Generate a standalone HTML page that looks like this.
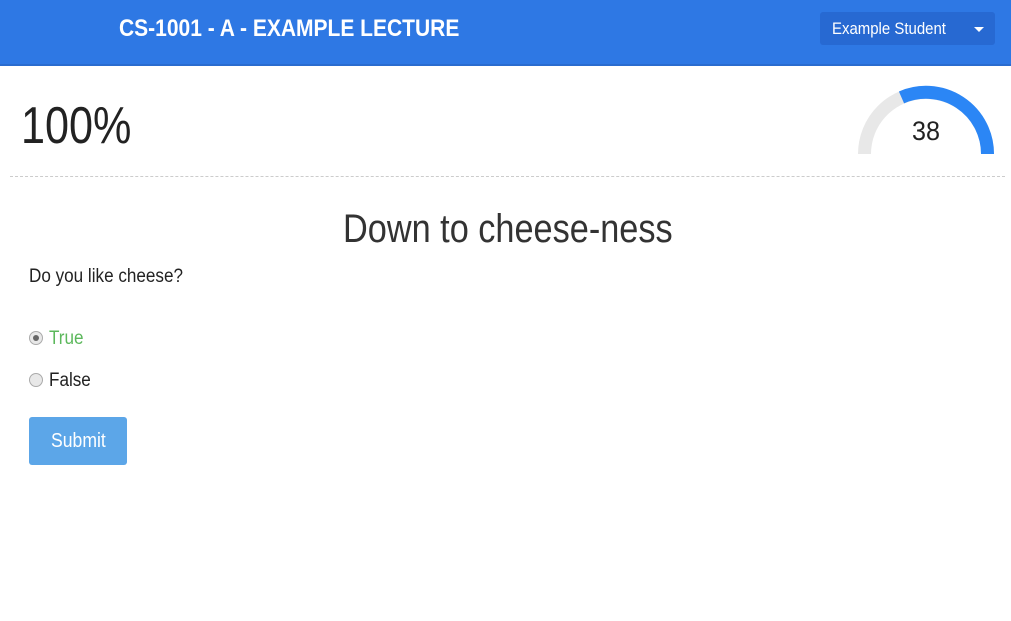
<!DOCTYPE html>
<html><head><style>
body{margin:0;width:1011px;height:621px;background:#fff;font-family:"Liberation Sans",sans-serif;color:#222;position:relative;overflow:hidden}
.s{display:inline-block;transform-origin:0 0;white-space:nowrap}
.hdr{position:absolute;left:0;top:0;width:1011px;height:64px;background:#2e78e4;border-bottom:2px solid #2a6ccf}
.title{position:absolute;left:119px;top:15px;color:#fff;font-weight:bold;font-size:24px;transform:scaleX(.875)}
.dd{position:absolute;left:820px;top:12px;width:175px;height:33px;background:#2769d2;border-radius:3px;color:#fff;font-size:17px}
.dd span{position:absolute;left:12px;top:7px;transform:scaleX(.88)}
.dd i{position:absolute;left:154px;top:15px;border-left:5px solid transparent;border-right:5px solid transparent;border-top:5px solid #fff}
.pct{position:absolute;left:21px;top:96px;font-size:52px;color:#222;transform:scaleX(.83)}
.hr{position:absolute;left:10px;top:176px;width:995px;border-top:1px dashed #ccc}
h1{position:absolute;left:343px;top:207px;margin:0;font-weight:normal;font-size:40px;color:#333;transform:scaleX(.857)}
.q{position:absolute;left:29px;top:266px;font-size:19px;transform:scaleX(.9)}
.r{position:absolute;left:29px;font-size:19px}
.r b{font-weight:normal;transform:scaleX(.9)}
.rad{display:inline-block;width:12px;height:12px;border:1px solid #aaa;border-radius:50%;background:#e8e8e8;vertical-align:-1px;margin-right:6px;position:relative}
.rad.on::after{content:"";position:absolute;left:3px;top:3px;width:6px;height:6px;border-radius:50%;background:#666}
.btn{position:absolute;left:29px;top:417px;width:98px;height:48px;background:#5ca6e8;border-radius:3px;color:#fff;font-size:20px;line-height:48px}
.btn span{position:absolute;left:22px;top:0;transform:scaleX(.88)}
</style></head><body>
<div class="hdr"><div class="title s">CS-1001 - A - EXAMPLE LECTURE</div>
<div class="dd"><span class="s">Example Student</span><i></i></div></div>
<div class="pct s">100%</div>
<svg style="position:absolute;left:850px;top:80px" width="160" height="80">
<path d="M14.5 74 A61.5 61.5 0 0 1 137.5 74" fill="none" stroke="#e8e8e8" stroke-width="13"/>
<path d="M51.5 17.4 A61.5 61.5 0 0 1 137.5 74" fill="none" stroke="#2b86f5" stroke-width="13"/>
<text x="76" y="60" text-anchor="middle" font-size="27" fill="#222" textLength="28" lengthAdjust="spacingAndGlyphs">38</text>
</svg>
<div class="hr"></div>
<h1 class="s">Down to cheese-ness</h1>
<div class="q s">Do you like cheese?</div>
<div class="r" style="top:328px;color:#5cb85c"><span class="rad on"></span><b class="s">True</b></div>
<div class="r" style="top:370px"><span class="rad"></span><b class="s">False</b></div>
<div class="btn"><span class="s">Submit</span></div>
</body></html>
